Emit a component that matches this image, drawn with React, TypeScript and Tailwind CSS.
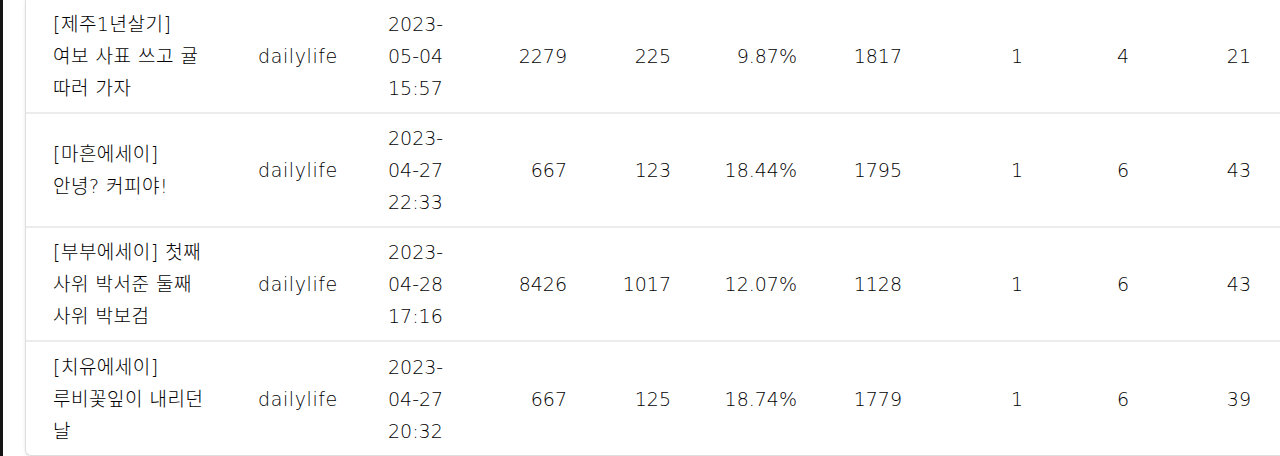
import React from "react";

type Row = {
  title: string[];
  cat: string;
  date: string[];
  views: string;
  c5: string;
  pct: string;
  c7: string;
  c8: string;
  c9: string;
  c10: string;
};

const rows: Row[] = [
  {
    title: ["[제주1년살기]", "여보 사표 쓰고 귤", "따러 가자"],
    cat: "dailylife",
    date: ["2023-", "05-04", "15:57"],
    views: "2279",
    c5: "225",
    pct: "9.87%",
    c7: "1817",
    c8: "1",
    c9: "4",
    c10: "21",
  },
  {
    title: ["[마흔에세이]", "안녕? 커피야!"],
    cat: "dailylife",
    date: ["2023-", "04-27", "22:33"],
    views: "667",
    c5: "123",
    pct: "18.44%",
    c7: "1795",
    c8: "1",
    c9: "6",
    c10: "43",
  },
  {
    title: ["[부부에세이] 첫째", "사위 박서준 둘째", "사위 박보검"],
    cat: "dailylife",
    date: ["2023-", "04-28", "17:16"],
    views: "8426",
    c5: "1017",
    pct: "12.07%",
    c7: "1128",
    c8: "1",
    c9: "6",
    c10: "43",
  },
  {
    title: ["[치유에세이]", "루비꽃잎이 내리던", "날"],
    cat: "dailylife",
    date: ["2023-", "04-27", "20:32"],
    views: "667",
    c5: "125",
    pct: "18.74%",
    c7: "1779",
    c8: "1",
    c9: "6",
    c10: "39",
  },
];

function Lines({ lines }: { lines: string[] }) {
  return (
    <div>
      {lines.map((l, i) => (
        <div key={i} className="whitespace-nowrap">
          {l}
        </div>
      ))}
    </div>
  );
}

export default function App() {
  return (
    <div
      className="flex h-[456px] w-[1280px] overflow-hidden bg-white text-[19px] font-light leading-[32px] text-[#000000]"
      style={{ fontFamily: '"DejaVu Sans", "Noto Sans CJK KR", sans-serif' }}
    >
      <div className="h-full w-[3px] shrink-0 bg-[#141414]" />
      <div className="ml-[22px] flex-1">
        <div className="w-[1300px] overflow-hidden rounded-bl-[6px] border-l border-b border-[#dedede] shadow-[0_1px_3px_rgba(0,0,0,0.10)]">
          {rows.map((r, i) => (
            <div
              key={i}
              className={`grid grid-cols-[212px_132px_110px_87px_104px_126px_105px_121px_106px_122px_1fr] items-center ${
                i < rows.length - 1 ? "h-[114px] border-b-2 border-[#ececec]" : "h-[113px]"
              }`}
            >
              <div className="pl-[27px] tracking-[0.5px]">
                <Lines lines={r.title} />
              </div>
              <div className="pl-[20px] tracking-[0.6px]">{r.cat}</div>
              <div className="pl-[18px]">
                <Lines lines={r.date} />
              </div>
              <div className="text-right">{r.views}</div>
              <div className="text-right">{r.c5}</div>
              <div className="text-right">{r.pct}</div>
              <div className="text-right">{r.c7}</div>
              <div className="text-right">{r.c8}</div>
              <div className="text-right">{r.c9}</div>
              <div className="text-right">{r.c10}</div>
              <div />
            </div>
          ))}
        </div>
      </div>
    </div>
  );
}
